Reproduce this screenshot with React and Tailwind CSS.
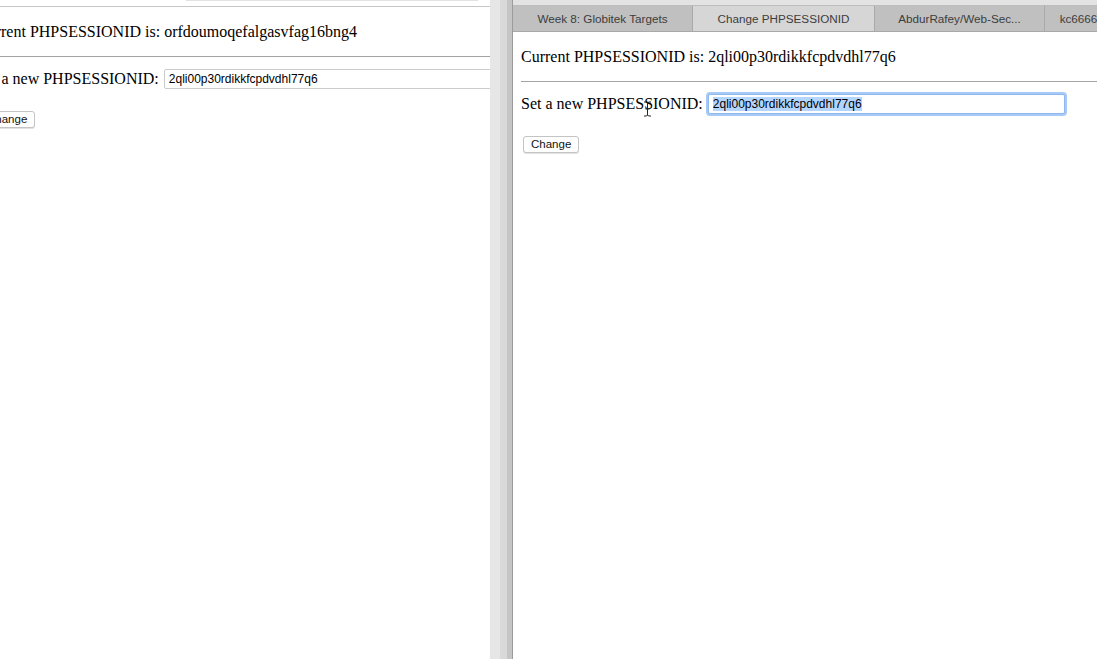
import React from "react";

const sid = "2qli00p30rdikkfcpdvdhl77q6";

// One copy of the session page; the left window shows it clipped and shifted
function SessionPage({ current, focused }) {
  return (
    <div className="font-['Liberation_Serif',serif] text-[16px] text-black">
      <p className="mt-[16px] h-[18px] whitespace-nowrap leading-[18px]">
        Current PHPSESSIONID is: {current}
      </p>
      <hr className="mt-[15px] border-0 border-t border-[#a3a3a3]" />
      <div className="mt-[11px] flex h-[21px] items-center whitespace-nowrap">
        <span className="leading-[18px]">Set a new PHPSESSIONID:</span>
        <div
          className={`ml-[5px] flex h-[20px] w-[357px] shrink-0 items-center rounded-[2px] border bg-white pl-[4px] font-['Liberation_Sans',sans-serif] text-[12px] ${
            focused
              ? "border-[#8fb8ee] shadow-[0_0_0_2px_#a6c9f6]"
              : "border-[#cbcbcb]"
          }`}
        >
          <span className={focused ? "bg-[#b4d5fe] leading-[14px]" : "leading-[14px]"}>
            {sid}
          </span>
        </div>
      </div>
      <button className="mt-[22px] ml-[2px] flex h-[17px] items-center rounded-[3px] border border-[#c4c4c4] bg-white px-[7px] font-['Liberation_Sans',sans-serif] text-[11.5px] text-[#111] shadow-[0_1px_0_#e2e2e2]">
        Change
      </button>
    </div>
  );
}

const tabs = [
  { label: "Week 8: Globitek Targets", w: "w-[180px]" },
  { label: "Change PHPSESSIONID", w: "w-[182px]", active: true },
  { label: "AbdurRafey/Web-Sec...", w: "w-[170px]" },
  { label: "kc666666666666", w: "w-[120px]" },
];

export default function App() {
  return (
    <div className="flex h-[659px] w-[1097px] overflow-hidden bg-white">
      {/* left window */}
      <div className="flex w-[490px] shrink-0 flex-col overflow-hidden">
        <div className="h-[7px] shrink-0 border-b border-[#c6c6c6]">
          <div className="ml-[186px] h-[1px] w-[292px] bg-[#e2e2e2]" />
        </div>
        <div className="ml-[-23px]">
          <SessionPage current="orfdoumoqefalgasvfag16bng4" />
        </div>
      </div>

      {/* window edge */}
      <div className="flex w-[22px] shrink-0">
        <div className="w-[10px] bg-[#e6e6e6]" />
        <div className="w-[7px] bg-[#d9d9d9]" />
        <div className="w-[5px] bg-[#c5c5c5]" />
      </div>

      {/* right window */}
      <div className="relative flex min-w-0 flex-1 flex-col border-l border-[#9b9b9b]">
        <div className="h-[6px] shrink-0 border-b border-[#bdbdbd] bg-[#e3e3e3]" />
        <div className="flex h-[26px] shrink-0 border-b border-[#a9a9a9] bg-[#c0c0c0] font-['Liberation_Sans',sans-serif] text-[11.7px] text-[#3d3d3d]">
          {tabs.map((t) => (
            <div
              key={t.label}
              className={`flex shrink-0 items-center justify-center overflow-hidden whitespace-nowrap border-r border-[#a9a9a9] ${t.w} ${
                t.active ? "bg-[#d6d6d6]" : ""
              }`}
            >
              {t.label}
            </div>
          ))}
        </div>
        <div className="pl-[8px]">
          <SessionPage current={sid} focused />
        </div>

        {/* mouse I-beam */}
        <svg
          className="absolute left-[130px] top-[101px]"
          width="9"
          height="16"
          viewBox="0 0 9 16"
        >
          <path
            d="M1 1h2.5L4.5 2l1-1H8M4.5 2v12M1 15h2.5l1-1 1 1H8M2.5 8h4"
            fill="none"
            stroke="#222"
            strokeWidth="1"
          />
        </svg>
      </div>
    </div>
  );
}
